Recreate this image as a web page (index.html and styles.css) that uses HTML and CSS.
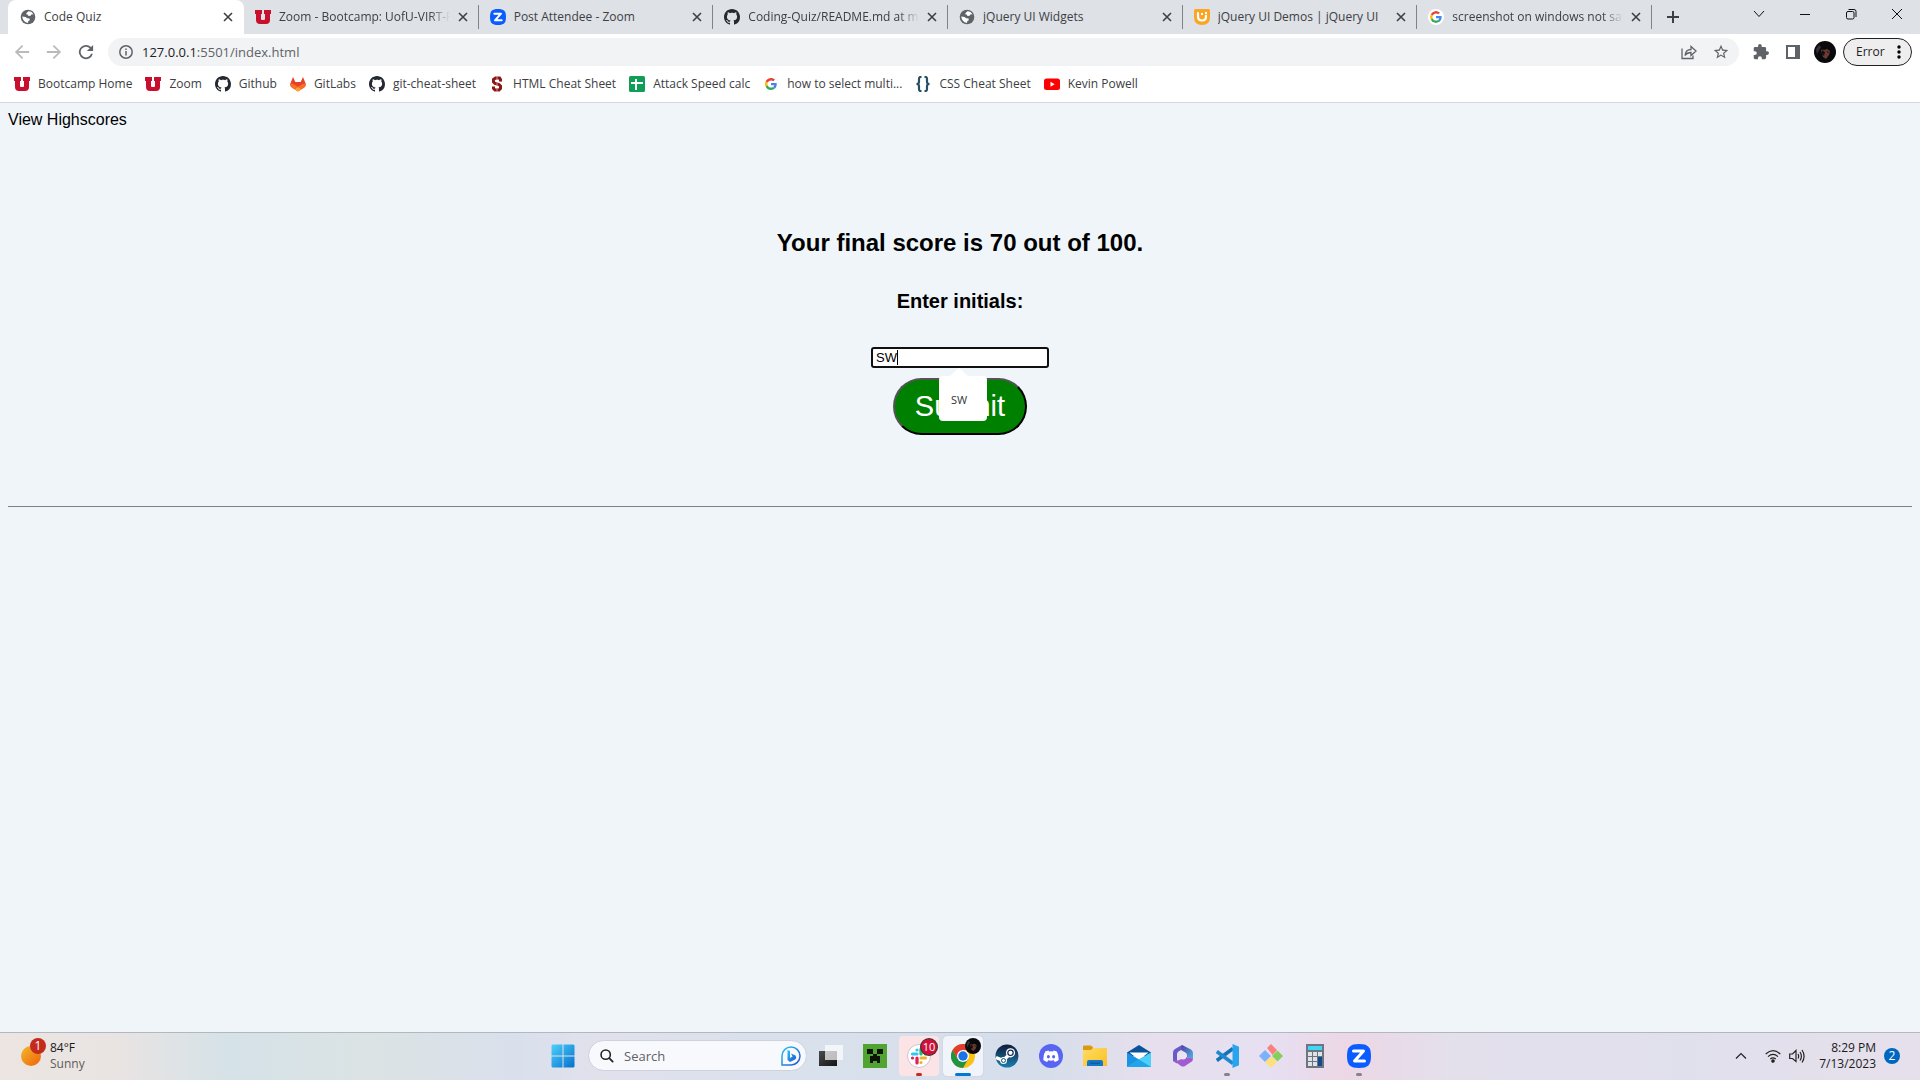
FILE: index.html
```html
<!DOCTYPE html>
<html lang="en">
<head>
<meta charset="utf-8">
<title>Code Quiz</title>
<link rel="stylesheet" href="styles.css">
</head>
<body>
<svg class="sprite" aria-hidden="true">
  <defs>
    <linearGradient id="win-g" x1="0" y1="0" x2="1" y2="1"><stop offset="0" stop-color="#4cd0fb"/><stop offset="1" stop-color="#0670cd"/></linearGradient>
    <linearGradient id="sun-g" x1="0" y1="0" x2="1" y2="1"><stop offset="0" stop-color="#f2b92e"/><stop offset="1" stop-color="#ef6207"/></linearGradient>
    <linearGradient id="bing-g" x1="0" y1="0" x2="1" y2="1"><stop offset="0" stop-color="#2bc5f4"/><stop offset="1" stop-color="#1f53c9"/></linearGradient>
    <linearGradient id="steam-g" x1="0" y1="0" x2="0" y2="1"><stop offset="0" stop-color="#101a3c"/><stop offset="1" stop-color="#1a7fae"/></linearGradient>
    <linearGradient id="dark-g" x1="0" y1="0" x2="1" y2="1"><stop offset="0" stop-color="#4a4a4a"/><stop offset="1" stop-color="#151515"/></linearGradient>
    <linearGradient id="folder-g" x1="0" y1="0" x2="1" y2="1"><stop offset="0" stop-color="#ffdc62"/><stop offset="1" stop-color="#fbbf25"/></linearGradient>
    <linearGradient id="m365-g" x1="0" y1="0" x2="1" y2="1"><stop offset="0" stop-color="#4b3fa5"/><stop offset="1" stop-color="#54b4e4"/></linearGradient>
  </defs>
  <symbol id="globe" viewBox="0 0 16 16"><circle cx="8" cy="8" r="7.300" fill="#5f6368"/><path fill="#fff" d="M8.500 2.200Q12 2.300 13.500 5.500l-1.800-.2-1.200 1.500-2 .2-.8-1.500-1.700-.3 1-1.700zM2.200 7.500l3.300.5 1.700 1.300 2.300.2.300 1.700-1.500.8-.3 1.900Q3 13.500 2.200 7.500z"/></symbol>
  <symbol id="utah" viewBox="0 0 16 16"><path fill="#c8102e" d="M0 1h7v4H6v5q0 1 1 1h2q1 0 1-1V5H9V1h7v4h-1v6q0 4-4 4H5q-4 0-4-4V5H0z"/></symbol>
  <symbol id="zoomlogo" viewBox="0 0 24 24"><path fill="#0b5cff" d="M12 0c9 0 12 3 12 12s-3 12-12 12S0 21 0 12 3 0 12 0z"/><path fill="none" stroke="#fff" stroke-width="3" stroke-linejoin="round" stroke-linecap="round" d="M6.500 7H16.500L7.500 17H17.500"/></symbol>
  <symbol id="octo" viewBox="0 0 16 16"><path fill="#24292f" d="M8 0C3.580 0 0 3.580 0 8c0 3.540 2.290 6.530 5.470 7.590.4.070.55-.17.55-.38 0-.19-.01-.82-.01-1.490-2.010.37-2.530-.49-2.690-.94-.09-.23-.48-.94-.82-1.130-.28-.15-.68-.52-.01-.53.63-.01 1.080.58 1.230.82.72 1.210 1.870.87 2.330.66.07-.52.28-.87.51-1.070-1.780-.2-3.640-.89-3.640-3.950 0-.87.31-1.590.82-2.150-.08-.2-.36-1.020.08-2.120 0 0 .67-.21 2.200.82.64-.18 1.320-.27 2-.27s1.360.09 2 .27c1.530-1.040 2.200-.82 2.200-.82.44 1.100.16 1.920.08 2.120.51.56.82 1.270.82 2.150 0 3.070-1.870 3.750-3.650 3.950.29.25.54.73.54 1.480 0 1.070-.01 1.930-.01 2.200 0 .21.15.46.55.38A8 8 0 0 0 16 8c0-4.420-3.580-8-8-8z"/></symbol>
  <symbol id="google" viewBox="0 0 48 48"><path fill="#EA4335" d="M24 9.500c3.540 0 6.710 1.220 9.210 3.600l6.850-6.850C35.900 2.380 30.470 0 24 0 14.620 0 6.510 5.380 2.560 13.220l7.980 6.190C12.430 13.720 17.740 9.500 24 9.500z"/><path fill="#4285F4" d="M46.980 24.550c0-1.570-.15-3.090-.38-4.550H24v9.020h12.940c-.58 2.960-2.260 5.480-4.780 7.180l7.730 6c4.510-4.180 7.090-10.360 7.090-17.650z"/><path fill="#FBBC05" d="M10.530 28.590A14.500 14.500 0 0 1 10.530 19.410l-7.980-6.190a24 24 0 0 0 0 21.560l7.980-6.190z"/><path fill="#34A853" d="M24 48c6.480 0 11.930-2.130 15.890-5.810l-7.730-6c-2.150 1.450-4.920 2.300-8.160 2.300-6.260 0-11.570-4.220-13.470-9.910l-7.980 6.190C6.510 42.620 14.620 48 24 48z"/></symbol>
  <symbol id="jq" viewBox="0 0 16 16"><path fill="#faa523" d="M1.500 0h13Q16 0 16 1.500V8q0 8-8 8T0 8V1.500Q0 0 1.500 0z"/><path fill="none" stroke="#fff" stroke-width="2.200" stroke-linecap="round" d="M4 4v3.500q0 4 4 4t4-4V6.500"/><path fill="#fff" d="M7 4h2v2H7zM11 3h2v2h-2z"/></symbol>
  <symbol id="gitlab" viewBox="0 0 16 16"><path fill="#e24329" d="M3 1 5.300 6h5.400L13 1l2.600 6.500q.8 2.500-1.400 4L8 15.500l-6.200-4q-2.200-1.500-1.400-4z"/><path fill="#fc6d26" d="M.4 7.500Q2.500 7 5 9l6.500 4L8 15.500l-6.200-4Q-.2 10 .4 7.500zM15.600 7.500Q13.500 7 11 9l-6.500 4L8 15.500l6.200-4q2-1.500 1.400-4z"/><path fill="#fca326" d="m8 11 3.500 2.200L8 15.500l-3.500-2.300z"/></symbol>
  <symbol id="stanford" viewBox="0 0 16 16"><path fill="none" stroke="#8c1515" stroke-width="3" d="M11.500 5.500V3.500L10.500 2h-4L4.500 3.500V6L6 7.500l4 1L11.500 10v2.500L10 14H6l-1.500-1.500v-2"/><path fill="none" stroke="#dcb3b3" stroke-width=".8" d="M8 0v3.500M8 7v3M8 12.500V16"/></symbol>
  <symbol id="sheets" viewBox="0 0 16 16"><rect width="16" height="16" rx="1.500" fill="#0f9d58"/><path fill="#fff" d="M6 3h2v3h6v2H8v6H6V8H2V6h4z"/></symbol>
  <symbol id="braces" viewBox="0 0 16 16"><path fill="none" stroke="#264f63" stroke-width="2.200" d="M6.500 1H5.500Q4 1 4 3v3Q4 8 1.500 8 4 8 4 10v3q0 2 1.500 2h1M9.500 1h1Q12 1 12 3v3q0 2 2.500 2-2.500 0-2.500 2v3q0 2-1.500 2h-1"/></symbol>
  <symbol id="youtube" viewBox="0 0 16 16"><rect y="2.500" width="16" height="11.500" rx="2.500" fill="#f00"/><path fill="#fff" d="m6.500 5.700 4.200 2.500-4.200 2.500z"/></symbol>
  <symbol id="avatar" viewBox="0 0 22 22"><circle cx="11" cy="11" r="11" fill="#0a0a0d"/><path fill="#6b3b33" d="M7 9q1-1 3 0l3-1 3 2-1 4-3 4-3-2z"/><path fill="#111" d="m8 9 3 2-1 4-2-2zM12 10l3 1-1 1z"/><path fill="#33303a" d="m2 8 3-4 2 2-4 7z"/></symbol>
  <symbol id="cross" viewBox="0 0 10 10"><path fill="none" stroke="currentColor" stroke-width="1.600" d="m1 1 8 8M9 1 1 9"/></symbol>
</svg>

<div class="browser">
  <header>
    <div class="tabstrip">
      <ul class="tabs">
        <li class="tab active"><svg class="fav"><use href="#globe"/></svg><span>Code Quiz</span><button aria-label="Close tab"><svg><use href="#cross"/></svg></button></li>
        <li class="tab"><svg class="fav"><use href="#utah"/></svg><span class="fade">Zoom - Bootcamp: UofU-VIRT-FS</span><button aria-label="Close tab"><svg><use href="#cross"/></svg></button></li>
        <li class="tab"><svg class="fav"><use href="#zoomlogo"/></svg><span>Post Attendee - Zoom</span><button aria-label="Close tab"><svg><use href="#cross"/></svg></button></li>
        <li class="tab"><svg class="fav"><use href="#octo"/></svg><span class="fade">Coding-Quiz/README.md at ma</span><button aria-label="Close tab"><svg><use href="#cross"/></svg></button></li>
        <li class="tab"><svg class="fav"><use href="#globe"/></svg><span>jQuery UI Widgets</span><button aria-label="Close tab"><svg><use href="#cross"/></svg></button></li>
        <li class="tab"><svg class="fav"><use href="#jq"/></svg><span>jQuery UI Demos | jQuery UI</span><button aria-label="Close tab"><svg><use href="#cross"/></svg></button></li>
        <li class="tab"><svg class="fav disc"><use href="#google"/></svg><span class="fade">screenshot on windows not savin</span><button aria-label="Close tab"><svg><use href="#cross"/></svg></button></li>
      </ul>
      <button class="newtab" aria-label="New tab"><svg viewBox="0 0 12 12"><path stroke="#3c4043" stroke-width="2" d="M6 0v12M0 6h12"/></svg></button>
      <div class="winctl">
        <button aria-label="Search tabs"><svg viewBox="0 0 12 12"><path d="m1 3 5 5.500L11 3"/></svg></button>
        <button aria-label="Minimize"><svg viewBox="0 0 12 12"><path d="M1 6.500h10"/></svg></button>
        <button aria-label="Restore"><svg viewBox="0 0 12 12"><rect x="1.500" y="3.500" width="7.500" height="7.500" rx="1.500"/><path d="M3.500 1.500H9q2 0 2 2V9"/></svg></button>
        <button aria-label="Close"><svg viewBox="0 0 12 12"><path d="m1 1 10 10M11 1 1 11"/></svg></button>
      </div>
    </div>

    <div class="toolbar">
      <button class="nav off" aria-label="Back"><svg viewBox="3 3 18 18"><path d="M20 11H7.830l5.590-5.590L12 4l-8 8 8 8 1.410-1.410L7.830 13H20z"/></svg></button>
      <button class="nav off" aria-label="Forward"><svg viewBox="3 3 18 18"><path d="M4 11h12.170l-5.590-5.590L12 4l8 8-8 8-1.410-1.410L16.170 13H4z"/></svg></button>
      <button class="nav" aria-label="Reload"><svg viewBox="3 3 18 18"><path d="M17.650 6.350A8 8 0 1 0 19.730 14h-2.080A6 6 0 1 1 16.220 7.780L13 11h7V4z"/></svg></button>
      <div class="omnibox">
        <svg class="info" viewBox="0 0 14 14"><circle cx="7" cy="7" r="6.200" fill="none" stroke="#5f6368" stroke-width="1.500"/><path stroke="#5f6368" stroke-width="1.500" d="M7 6v4.500M7 3.500V5"/></svg>
        <p class="url">127.0.0.1<span>:5501/index.html</span></p>
        <button aria-label="Share"><svg viewBox="0 0 16 16"><path fill="none" stroke="#5f6368" stroke-width="1.300" d="M1 4.500v10h11V11.500M4 11.500Q4.500 5.500 10 5.500V2.500l5 4.500-5 4.500V8.500Q6 8.500 4 11.500z"/></svg></button>
        <button aria-label="Bookmark"><svg viewBox="1 1 22 22"><path fill="#5f6368" d="m22 9.240-7.190-.620L12 2 9.190 8.630 2 9.240l5.460 4.730L5.820 21 12 17.270 18.180 21l-1.630-7.030zM12 15.400l-3.760 2.270 1-4.280-3.320-2.880 4.380-.380L12 6.100l1.710 4.040 4.380.380-3.320 2.880 1 4.280z"/></svg></button>
      </div>
      <button class="nav ext" aria-label="Extensions"><svg viewBox="1 1 22 22"><path d="M20.500 11H19V7a2 2 0 0 0-2-2h-4V3.500a2.500 2.500 0 0 0-5 0V5H4a2 2 0 0 0-2 2v3.800h1.500a2.700 2.700 0 0 1 0 5.400H2V20a2 2 0 0 0 2 2h3.800v-1.500a2.700 2.700 0 0 1 5.400 0V22H17a2 2 0 0 0 2-2v-4h1.500a2.500 2.500 0 0 0 0-5z"/></svg></button>
      <button class="nav panel" aria-label="Side panel"><svg viewBox="0 0 14 14"><path fill-rule="evenodd" d="M0 0h14v14H0zM2 2v10h7V2z"/></svg></button>
      <button class="nav me" aria-label="Profile"><svg><use href="#avatar"/></svg></button>
      <button class="error">Error<svg viewBox="0 0 4 14"><circle cx="2" cy="2" r="1.700"/><circle cx="2" cy="7" r="1.700"/><circle cx="2" cy="12" r="1.700"/></svg></button>
    </div>

    <nav class="bookmarks">
      <a href="#"><svg><use href="#utah"/></svg>Bootcamp Home</a>
      <a href="#"><svg><use href="#utah"/></svg>Zoom</a>
      <a href="#"><svg><use href="#octo"/></svg>Github</a>
      <a href="#"><svg><use href="#gitlab"/></svg>GitLabs</a>
      <a href="#"><svg><use href="#octo"/></svg>git-cheat-sheet</a>
      <a href="#"><svg><use href="#stanford"/></svg>HTML Cheat Sheet</a>
      <a href="#"><svg><use href="#sheets"/></svg>Attack Speed calc</a>
      <a href="#"><svg class="small"><use href="#google"/></svg>how to select multi...</a>
      <a href="#"><svg><use href="#braces"/></svg>CSS Cheat Sheet</a>
      <a href="#"><svg><use href="#youtube"/></svg>Kevin Powell</a>
    </nav>
  </header>

  <main>
    <a class="scores" href="#">View Highscores</a>
    <form class="result">
      <h2>Your final score is 70 out of 100.</h2>
      <label for="initials">Enter initials:</label>
      <div class="field">
        <input id="initials" type="text" value="SW">
        <i class="caret"></i>
        <div class="suggest">SW</div>
      </div>
      <button type="button">Submit</button>
    </form>
    <hr>
  </main>

  <footer class="taskbar">
    <div class="weather">
      <svg viewBox="0 0 28 28"><circle cx="11" cy="18" r="10" fill="url(#sun-g)"/></svg><b>1</b>
      <p>84°F<span>Sunny</span></p>
    </div>
    <div class="apps">
      <button aria-label="Start"><svg viewBox="0 0 24 24"><path fill="url(#win-g)" d="M1.500.5h10v11H.5v-10zM12.500.5h10l1 1v10h-11zM.5 12.500h11v11h-10l-1-1zM12.500 12.500h11v10l-1 1h-10z"/></svg></button>
      <div class="search">
        <svg viewBox="0 0 16 16"><circle cx="6.500" cy="6.500" r="5.300" fill="none" stroke="#222" stroke-width="1.800"/><path stroke="#222" stroke-width="2" stroke-linecap="round" d="m10.500 10.500 4 4"/></svg>
        <input type="text" placeholder="Search" aria-label="Search">
        <svg class="bing" viewBox="0 0 20 20"><path fill="none" stroke="url(#bing-g)" stroke-width="1.500" d="M1 19v-9a9 9 0 1 1 9 9z"/><path fill="url(#bing-g)" d="m6.500 4 2.500 1v7l2.500-1.500-1.500-3 4.500 2q1.500 2-.5 4L9 16l-2.500-2z"/></svg>
      </div>
      <button aria-label="Task view"><svg viewBox="0 0 24 24"><path fill="url(#dark-g)" d="M0 7h18v15H0z"/><path fill="#fff" fill-opacity=".7" d="M6 1h18v15H6z"/></svg></button>
      <button aria-label="Minecraft"><svg viewBox="0 0 24 24"><path fill="#51a332" d="M0 0h24v24H0z"/><path fill="#0c1408" d="M4 5h6v5H4zM14 5h6v5h-6zM10 10h4v2h3v7h-3v-2h-4v2H7v-7h3z"/></svg></button>
      <button class="alert" aria-label="Slack"><svg viewBox="0 0 24 24"><circle cx="12" cy="12" r="11.500" fill="#fff" stroke="#c9c5c9"/><g stroke-width="3.200" stroke-linecap="round"><path stroke="#36c5f0" d="M10 6v0M5.500 10H10"/><path stroke="#2eb67d" d="M14 5v5M18.500 10v0"/><path stroke="#ecb22e" d="M14 14h4.500M14 18.500v0"/><path stroke="#e01e5a" d="M10 14v5M5.500 14v0"/></g></svg><b>10</b></button>
      <button class="current" aria-label="Chrome"><svg viewBox="0 0 24 24"><circle cx="12" cy="12" r="12" fill="#fbc116"/><path fill="#e33b2e" d="M1.600 6A12 12 0 0 1 22.400 6H12l-5.200 9z"/><path fill="#229342" d="M1.600 6A12 12 0 0 0 12 24l5.200-9H6.800z"/><circle cx="12" cy="12" r="6" fill="#fff"/><circle cx="12" cy="12" r="4.700" fill="#1a73e8"/></svg><svg class="mini"><use href="#avatar"/></svg></button>
      <button aria-label="Steam"><svg viewBox="0 0 24 24"><circle cx="12" cy="12" r="11.500" fill="url(#steam-g)"/><path fill="none" stroke="#fff" stroke-width="3.500" d="M1 13.500 8 16.500 15 10"/><circle cx="15.500" cy="8.800" r="4.600" fill="#fff"/><circle cx="15.500" cy="8.800" r="2.700" fill="none" stroke="#14254b" stroke-width="1.200"/><circle cx="8.500" cy="16.500" r="3.500" fill="#fff"/><circle cx="8.500" cy="16.500" r="2" fill="none" stroke="#16537f"/></svg></button>
      <button aria-label="Discord"><svg viewBox="0 0 24 24"><circle cx="12" cy="12" r="12" fill="#5865f2"/><path fill="#fff" d="M9.500 6.500Q7.500 6.800 6.200 7.500 4 11 4.300 16q2 1.500 3.900 1.900l1-1.600q2.800.7 5.600 0l1 1.600q2-.4 3.900-1.900.3-5-1.900-8.500-1.400-.7-3.300-1l-.6 1q-2-.3-3.800 0z"/><ellipse cx="9.400" cy="12.700" rx="1.500" ry="1.700" fill="#5865f2"/><ellipse cx="14.600" cy="12.700" rx="1.500" ry="1.700" fill="#5865f2"/></svg></button>
      <button aria-label="File Explorer"><svg viewBox="0 0 24 24"><path fill="#d99a13" d="M0 2.500Q0 1.500 1 1.500h7l2.500 2.500v3H0z"/><path fill="url(#folder-g)" d="M0 6h8l2-2h13q1 0 1 1v17H0z"/><path fill="#1577c5" d="M4 22v-4q0-2 2-2h12q2 0 2 2v4z"/><path fill="#0b5a9e" d="M7 18.500h10v1.300H7z"/></svg></button>
      <button aria-label="Mail"><svg viewBox="0 0 24 24"><path fill="#0a5299" d="M0 8.500 12 1l12 7.500V12H0z"/><path fill="#fff" d="M2.500 8.500h19L12 16z"/><path fill="#1a93e4" d="M0 8.500 12 15.500 24 8.500V23H0z"/><path fill="#4dd0fa" d="M24 8.500V23H0z"/><path fill="#1fa5ec" d="m0 23 12-7.500L24 23z"/></svg></button>
      <button aria-label="Microsoft 365"><svg viewBox="0 0 24 24"><path fill="#6a5ac6" d="M11 1 4 5Q2 6 2 8.500V17l4 2.500V10q0-1.500 1.500-2.500L14 3.500z"/><path fill="url(#m365-g)" d="m11 1 9 4.500Q22 7 22 9v6l-6-2v-2q0-1.500-1.500-2.500L10 6z"/><path fill="#a05bd0" d="m2 16 5 .5 8-3.500 7 1.500q0 2.500-2 3.500l-6 4q-2 1.200-4 0z"/><circle cx="12" cy="12" r="3.500" fill="#ece4f5"/></svg></button>
      <button class="running" aria-label="Visual Studio Code"><svg viewBox="0 0 24 24"><path fill="none" stroke="#1273b8" stroke-width="3.600" stroke-linejoin="round" d="M18 4.500 1.800 16.500"/><path fill="none" stroke="#1d8ad0" stroke-width="3.600" d="M1.800 7.500 18 19.500"/><path fill="#2aa4ec" d="m17.500 0 6.500 2.800v18.400L17.500 24z"/></svg></button>
      <button aria-label="Git Bash"><svg viewBox="0 0 24 24"><path fill="#fb7f7c" d="m12 0 6 6-4.500 5L8 4z"/><path fill="#7fb0fb" d="m6 6 6 6-6 6-6-6z"/><path fill="#85cf5c" d="m18.500 6.500 5.500 5.500-5.500 5.500-5.500-5.500z"/><path fill="#fde07c" d="m12 12.500 6 5.500-6 6-6-6z"/></svg></button>
      <button aria-label="Calculator"><svg viewBox="0 0 24 24"><path fill="#6d7680" d="M3 0h18v24H3z"/><path fill="#41d6f3" d="M5 2h14v4H5z"/><path fill="#dfe3e6" d="M5 8h4v4H5zM10 8h4v4h-4zM15 8h4v4h-4zM5 13h4v4H5zM10 13h4v4h-4zM5 18h4v4H5zM10 18h4v4h-4z"/><path fill="#134a8e" d="M15 13h4v9h-4z"/></svg></button>
      <button class="running" aria-label="Zoom"><svg><use href="#zoomlogo"/></svg></button>
    </div>
    <div class="tray">
      <svg class="up" viewBox="0 0 12 12"><path d="m1 8.500 5-5 5 5"/></svg>
      <svg viewBox="0 0 16 16"><path d="M.7 6Q8-.7 15.300 6M3 8.600Q8 4 13 8.600M5.300 11Q8 8.600 10.700 11"/><circle cx="8" cy="13" r="1.200" fill="#222"/></svg>
      <svg viewBox="0 0 16 16"><path d="M.7 6v4.500H3.500L7 13.500v-11L3.500 6zM9 6q1.300 2.200 0 4.500M11 4q2.800 4.200 0 8.500M13 2q4.200 6.200 0 12.500"/></svg>
      <p>8:29 PM<br>7/13/2023</p>
      <b>2</b>
    </div>
  </footer>
</div>
</body>
</html>
```
FILE: styles.css
```css
* { box-sizing: border-box; }
body {
  margin: 0;
  font: 12px/16px "Open Sans", "Noto Sans", sans-serif;
  color: #3c4043;
}
p, ul { margin: 0; padding: 0; }
button { border: 0; padding: 0; background: none; font: inherit; color: inherit; }
a { color: inherit; text-decoration: none; }
svg { display: block; flex: none; }
.sprite { position: absolute; width: 0; height: 0; }
.browser { display: flex; flex-direction: column; min-height: 100vh; }

/* Tab strip */
.tabstrip { display: flex; height: 34px; padding-left: 8px; background: #dee1e6; }
.tabs { display: flex; flex: 0 1 1644px; min-width: 0; list-style: none; }
.tab {
  display: flex;
  flex: 1 1 0;
  align-items: center;
  gap: 8px;
  min-width: 0;
  padding: 0 11px 0 11px;
  background: linear-gradient(#808387, #808387) right center / 1px 24px no-repeat;
}
.tab.active { flex: 0 1 236px; padding-left: 12px; background: #fff; border-radius: 8px 8px 0 0; }
.tab span { flex: 1; min-width: 0; overflow: hidden; white-space: nowrap; }
.tab .fade { -webkit-mask: linear-gradient(90deg, #000 88%, transparent); mask: linear-gradient(90deg, #000 88%, transparent); }
.fav { width: 16px; height: 16px; }
.fav.disc { padding: 2px; border-radius: 50%; background: #fff; }
.tab button svg { width: 10px; height: 10px; }
.newtab { display: grid; place-items: center; width: 42px; }
.newtab svg { width: 12px; height: 12px; }
.winctl { display: flex; height: 28px; margin-left: auto; }
.winctl button { display: grid; place-items: center; width: 46px; }
.winctl svg { width: 12px; height: 12px; fill: none; stroke: #111; }

/* Toolbar */
.toolbar { display: flex; align-items: center; height: 36px; padding: 4px 8px 4px 6px; background: #fff; }
.nav { display: grid; place-items: center; width: 32px; height: 28px; }
.nav svg { width: 16px; height: 16px; fill: #5f6368; }
.nav.off svg { fill: #bababa; }
.nav.panel svg { width: 14px; height: 14px; }
.nav.ext { margin-left: 6px; }
.nav.me svg { width: 22px; height: 22px; }
.omnibox {
  display: flex;
  flex: 1;
  align-items: center;
  height: 28px;
  margin-left: 6px;
  padding: 0 2px 0 11px;
  border-radius: 14px;
  background: #f1f3f4;
}
.info { width: 14px; height: 14px; }
.url { flex: 1; margin-left: 9px; font-size: 13px; color: #202124; }
.url span { color: #5f6368; }
.omnibox button { display: grid; place-items: center; width: 32px; }
.omnibox button svg { width: 16px; height: 16px; }
.error {
  display: flex;
  align-items: center;
  justify-content: space-between;
  width: 69px;
  height: 28px;
  margin-left: 2px;
  padding: 0 10px 0 12px;
  border: 1px solid #202124;
  border-radius: 14px;
  background: #eee;
  color: #202124;
}
.error svg { width: 4px; height: 14px; }

/* Bookmarks */
.bookmarks {
  display: flex;
  gap: 13px;
  height: 33px;
  padding: 0 14px;
  border-bottom: 1px solid #d5d8dc;
  background: #fff;
  white-space: nowrap;
}
.bookmarks a { display: flex; align-items: center; gap: 8px; height: 28px; }
.bookmarks svg { width: 16px; height: 16px; }
.bookmarks .small { padding: 2px; }

/* Quiz page */
main {
  flex: 1;
  padding: 8px;
  background: #eff5f9;
  font: 16px/18px "Liberation Sans", Arial, sans-serif;
  color: #000;
}
.scores { display: block; }
.result { display: flex; flex-direction: column; align-items: center; padding: 100px 0 71px; }
.result h2 { margin: 0 0 32px; font-size: 24px; line-height: 28px; }
.result label { margin-bottom: 34px; font-size: 20px; font-weight: bold; line-height: 24px; }
.field { position: relative; margin-bottom: 10px; }
.field input {
  display: block;
  width: 178px;
  height: 21px;
  padding: 0 3px;
  border: 2px solid #101010;
  border-radius: 3px;
  outline: 0;
  background: #fff;
  font: 13px/16px "Liberation Sans", Arial, sans-serif;
}
.caret { position: absolute; left: 26px; top: 3px; width: 1px; height: 15px; background: #000; }
.suggest {
  position: absolute;
  top: 29px;
  left: 68px;
  width: 48px;
  height: 45px;
  padding-top: 2px;
  border-radius: 4px;
  background: #fff;
  color: #333;
  font: 11px/43px "Open Sans", sans-serif;
  text-align: center;
  text-indent: -8px;
}
.suggest::before {
  content: "";
  position: absolute;
  left: 11px;
  top: -8px;
  border: solid transparent;
  border-width: 0 9px 8px;
  border-bottom-color: #fff;
}
.result button {
  padding: 10px 20px;
  border: 2px outset #000;
  border-radius: 30px;
  background: #008000;
  color: #fff;
  font-size: 29px;
  line-height: 33px;
}
hr { margin: 0; border: 0; border-top: 1px solid #808080; }

/* Taskbar */
.taskbar {
  display: grid;
  grid-template-columns: 1fr auto 1fr;
  height: 48px;
  border-top: 1px solid #b3b8c0;
  background: linear-gradient(90deg, #ece5e2 0%, #e9e4e2 6%, #d5e2e8 12%, #dbe3e4 19%, #d9e0ec 27%, #e1e1ec 31%, #d8e1ec 42%, #d5deea 54%, #e7dfed 60%, #e6e0f2 66%, #ecd7e6 70%, #e3e0ec 76%, #e0e0ec 88%, #e6e0ec 100%);
  color: #1a1a1a;
}
.weather { position: relative; display: flex; padding: 5px 0 0 20px; }
.weather svg { width: 28px; height: 28px; }
.weather b, .alert b {
  position: absolute;
  width: 16px;
  height: 16px;
  border-radius: 50%;
  background: #c42b1c;
  color: #fff;
  font-weight: normal;
  text-align: center;
}
.weather b { left: 30px; top: 5px; }
.weather p { margin-left: 2px; padding-top: 2px; }
.weather span { display: block; color: #5c5c5c; }
.apps { display: flex; align-items: center; padding: 0 0 2px 2px; }
.apps button {
  position: relative;
  display: grid;
  place-items: center;
  width: 40px;
  height: 40px;
  margin: 0 2px;
  border-radius: 4px;
}
.apps button > svg { width: 24px; height: 24px; }
.apps .alert { background: #fce4e6; }
.alert b { right: 2px; top: 3px; background: #d0103a; box-shadow: 0 0 0 1px #333; font-size: 11px; }
.apps .current { background: #f1f4fa; box-shadow: 0 0 1px #aaa; }
.apps .current .mini { position: absolute; right: 2px; top: 2px; width: 16px; height: 16px; }
.current::after, .running::after, .alert::after {
  content: "";
  position: absolute;
  bottom: 0;
  width: 16px;
  height: 3px;
  border-radius: 2px;
  background: #0078d4;
}
.running::after, .alert::after { width: 6px; background: #85828c; }
.alert::after { background: #c42b1c; }
.search {
  display: flex;
  align-items: center;
  width: 219px;
  height: 31px;
  margin: 0 2px 0 3px;
  padding: 0 5px 0 11px;
  border: 1px solid #cdd2dc;
  border-radius: 16px;
  background: #f7f9fc;
}
.search svg { width: 14px; height: 14px; }
.search .bing { width: 20px; height: 20px; }
.search input { flex: 1; min-width: 0; margin-left: 10px; padding: 0; border: 0; background: none; font: 13px/20px "Open Sans", sans-serif; }
.search input::placeholder { color: #5f6166; opacity: 1; }
.tray { display: flex; align-items: center; justify-content: flex-end; gap: 8px; padding: 0 20px 2px 0; }
.tray svg { width: 16px; height: 16px; fill: none; stroke: #222; stroke-width: 1.2; }
.tray .up { width: 12px; height: 12px; margin-right: 10px; }
.tray p { margin-left: 6px; text-align: right; }
.tray b { width: 16px; height: 16px; border-radius: 50%; background: #0067c0; color: #fff; font-weight: normal; text-align: center; }
```
